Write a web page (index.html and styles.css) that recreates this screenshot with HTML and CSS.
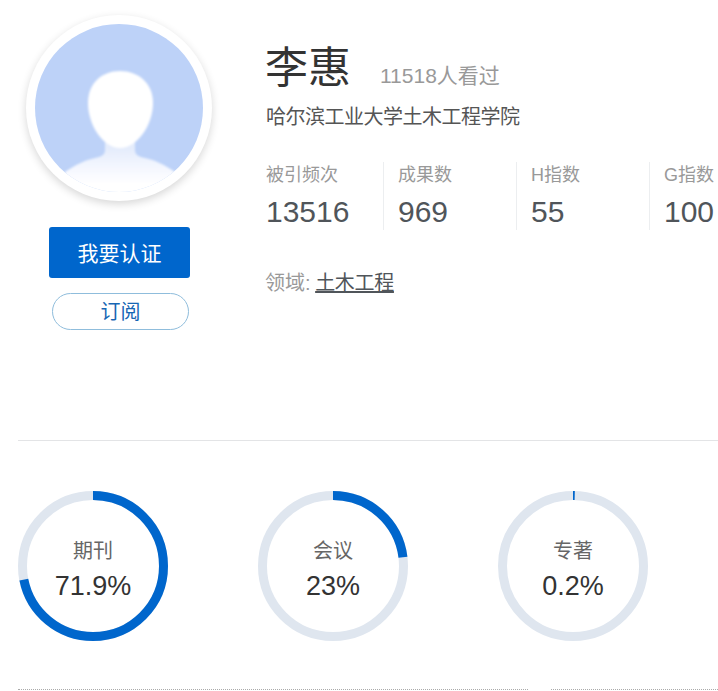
FILE: index.html
```html
<!DOCTYPE html>
<html lang="zh-CN">
<head>
<meta charset="utf-8">
<title>李惠</title>
<link rel="stylesheet" href="styles.css">
</head>
<body>
<section class="hero">
  <div class="side">
    <div class="avatar">
      <svg class="avatar-img" width="168" height="168" viewBox="0 0 168 168">
        <defs>
          <linearGradient id="bodyFade" x1="0" y1="0" x2="0" y2="1">
            <stop offset="0.2" stop-color="#e4ecfc"/>
            <stop offset="0.5" stop-color="#f3f6fe"/>
            <stop offset="0.8" stop-color="#ffffff"/>
          </linearGradient>
          <filter id="soft" x="-10%" y="-10%" width="120%" height="120%"><feGaussianBlur stdDeviation="0.8"/></filter>
          <clipPath id="disc"><circle cx="84" cy="84" r="84"/></clipPath>
        </defs>
        <g clip-path="url(#disc)">
          <rect width="168" height="168" fill="#bdd2f8"/>
          <g filter="url(#soft)">
            <path d="M70 112V126C70 131 66 133 60 134C50 136 40 141 30 148V172H140V148C130 141 120 136 110 134C104 133 100 131 100 126V112Z" fill="url(#bodyFade)"/>
            <path d="M85 47C103 47 118 59 118 79C118 101 102 124 85 124C68 124 53 101 53 79C53 59 67 47 85 47Z" fill="#fff"/>
          </g>
        </g>
      </svg>
    </div>
    <button class="btn-primary" type="button">我要认证</button>
    <button class="btn-outline" type="button">订阅</button>
  </div>
  <div class="info">
    <div class="title-row">
      <h1 class="name">李惠</h1>
      <span class="views">11518人看过</span>
    </div>
    <p class="affil">哈尔滨工业大学土木工程学院</p>
    <div class="stats">
      <div class="stat"><div class="stat-label">被引频次</div><div class="stat-num">13516</div></div>
      <div class="stat"><div class="stat-label">成果数</div><div class="stat-num">969</div></div>
      <div class="stat"><div class="stat-label">H指数</div><div class="stat-num">55</div></div>
      <div class="stat"><div class="stat-label">G指数</div><div class="stat-num">100</div></div>
    </div>
    <p class="field"><span class="field-label">领域:</span> <a class="field-link" href="#">土木工程</a></p>
  </div>
</section>
<section class="charts">
  <div class="donut">
    <svg class="ring" width="150" height="150" viewBox="0 0 150 150">
      <circle class="track" cx="75" cy="75" r="70.5"/>
      <circle class="arc" cx="75" cy="75" r="70.5" pathLength="100" stroke-dasharray="71.9 100"/>
    </svg>
    <div class="donut-text"><div class="donut-label">期刊</div><div class="donut-value">71.9%</div></div>
  </div>
  <div class="donut">
    <svg class="ring" width="150" height="150" viewBox="0 0 150 150">
      <circle class="track" cx="75" cy="75" r="70.5"/>
      <circle class="arc" cx="75" cy="75" r="70.5" pathLength="100" stroke-dasharray="23 100"/>
    </svg>
    <div class="donut-text"><div class="donut-label">会议</div><div class="donut-value">23%</div></div>
  </div>
  <div class="donut">
    <svg class="ring" width="150" height="150" viewBox="0 0 150 150">
      <circle class="track" cx="75" cy="75" r="70.5"/>
      <circle class="arc" cx="75" cy="75" r="70.5" pathLength="100" stroke-dasharray="0.4 100"/>
    </svg>
    <div class="donut-text"><div class="donut-label">专著</div><div class="donut-value">0.2%</div></div>
  </div>
</section>
<div class="bottom">
  <div class="dots dots-left"></div>
  <div class="dots dots-right"></div>
</div>
</body>
</html>
```
FILE: styles.css
```css
* { box-sizing: border-box; }
html, body { margin: 0; padding: 0; overflow: hidden; }
body {
  width: 718px;
  height: 691px;
  background: #fff;
  font-family: "Liberation Sans", "Noto Sans CJK SC", sans-serif;
  color: #333;
}
.hero {
  display: flex;
  height: 440px;
  margin-left: 18px;
}
.side {
  width: 202px;
  padding: 15px 0 0 8px;
  flex: none;
}
.avatar {
  width: 186px;
  height: 186px;
  padding: 9px;
  border-radius: 50%;
  background: #fff;
  box-shadow: 0 3px 9px rgba(0, 0, 0, .16);
}
.avatar-img { display: block; }
.btn-primary {
  display: block;
  width: 141px;
  height: 51px;
  margin: 26px 0 0 23px;
  padding: 0 0 2px;
  border: 0;
  border-radius: 3px;
  background: #0066cc;
  color: #fff;
  font: inherit;
  font-size: 21px;
}
.btn-outline {
  display: block;
  width: 137px;
  height: 37px;
  margin: 15px 0 0 26px;
  padding: 0 0 2px;
  border: 1px solid #8fbddc;
  border-radius: 19px;
  background: #fff;
  color: #1666b4;
  font: inherit;
  font-size: 20px;
}
.info {
  flex: 1;
  padding: 0 0 0 46px;
  min-width: 0;
}
.title-row {
  display: flex;
  align-items: baseline;
  height: 96px;
  padding-top: 38px;
  line-height: 60px;
  margin-left: -1px;
}
.name {
  margin: 0;
  font-size: 43px;
  font-weight: 400;
  color: #333;
  line-height: 60px;
}
.views {
  margin-left: 29px;
  font-size: 21px;
  color: #999;
}
.affil {
  margin: 0;
  height: 40px;
  font-size: 20px;
  line-height: 42px;
  color: #555;
  letter-spacing: -.5px;
}
.stats {
  display: flex;
  margin: 26px 0 0 -1px;
  height: 68px;
}
.stat {
  flex: none;
  width: 133px;
  padding-left: 14px;
  border-left: 1px solid #eceef0;
}
.stat:first-child {
  width: 118px;
  padding-left: 1px;
  border-left: 0;
}
.stat:last-child { width: 70px; }
.stat-label {
  font-size: 18px;
  line-height: 26px;
  color: #999;
  white-space: nowrap;
}
.stat-num {
  margin-top: 3px;
  font-size: 30px;
  line-height: 42px;
  color: #50555a;
}
.field {
  margin: 39px 0 0 -1px;
  font-size: 20px;
  line-height: 28px;
  word-spacing: -1px;
}
.field-label { color: #999; }
.field-link { color: #50555a; text-decoration: underline; letter-spacing: -.3px; }
.charts {
  display: flex;
  gap: 90px;
  height: 250px;
  margin-left: 18px;
  padding-top: 50px;
  border-top: 1px solid #e3e4e6;
}
.donut {
  display: grid;
  width: 150px;
  height: 150px;
  text-align: center;
}
.ring, .donut-text { grid-area: 1 / 1; }
.ring { display: block; }
.track { fill: none; stroke: #dfe6ef; stroke-width: 9; }
.arc {
  fill: none;
  stroke: #0066cc;
  stroke-width: 9;
  transform: rotate(-90deg);
  transform-origin: 75px 75px;
}
.donut-text { padding-top: 47px; }
.donut-label {
  font-size: 20px;
  line-height: 26px;
  color: #666;
}
.donut-value {
  margin-top: 5px;
  font-size: 27px;
  line-height: 34px;
  color: #333;
}
.bottom {
  display: flex;
  gap: 23px;
  margin: -1px 0 0 18px;
}
.dots { height: 1px; border-top: 1px dotted #aaa; }
.dots-left { width: 510px; }
.dots-right { flex: 1; }
```
